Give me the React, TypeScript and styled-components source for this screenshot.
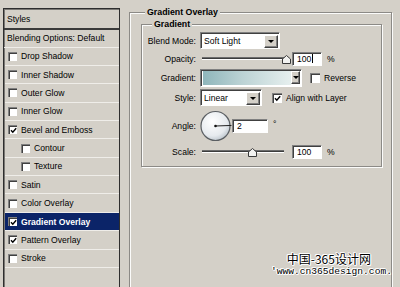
import React from "react";
import styled, { createGlobalStyle } from "styled-components";

const GlobalStyle = createGlobalStyle`
  html, body { margin: 0; padding: 0; background: #d4d0c8; }
  body { width: 400px; height: 287px; overflow: hidden; }
  *, *::before, *::after { box-sizing: border-box; }
`;

const Page = styled.div`
  position: relative;
  display: flex;
  align-items: flex-start;
  width: 400px;
  height: 287px;
  overflow: hidden;
  background: #d4d0c8;
  font-family: "Liberation Sans", Arial, sans-serif;
  font-size: 8.6px;
  color: #000;
`;

/* ---------- left styles list ---------- */

const StylesPanel = styled.div`
  flex-shrink: 0;
  margin: 8px 0 0 3px;
  width: 117px;
  height: 300px;
  border: 1px solid #2e2e2e;
  box-shadow: inset 1px 1px 0 #7a7874;
  display: flex;
  flex-direction: column;
`;

const PanelHeader = styled.div`
  height: 21px;
  display: flex;
  align-items: center;
  padding-left: 3px;
  border-bottom: 2px solid #3a3a3a;
`;

const BlendRow = styled.div`
  height: 17.6px;
  display: flex;
  align-items: center;
  padding-left: 3px;
  border-bottom: 1px solid #efede9;
`;

const ListRow = styled.div<{ $selected?: boolean; $indent?: boolean }>`
  height: 18.36px;
  display: flex;
  align-items: center;
  gap: 4px;
  margin-left: 1px;
  padding-left: ${(p) => (p.$indent ? 16 : 3)}px;
  border-bottom: 1px solid #efede9;
  background: ${(p) => (p.$selected ? "#0b2468" : "transparent")};
  color: ${(p) => (p.$selected ? "#fff" : "#000")};
  font-weight: ${(p) => (p.$selected ? 700 : 400)};
  white-space: nowrap;
`;

const Box = styled.span<{ $size?: number }>`
  flex-shrink: 0;
  width: ${(p) => p.$size ?? 9}px;
  height: ${(p) => p.$size ?? 9}px;
  background: #fff;
  border-top: 1px solid #808080;
  border-left: 1px solid #808080;
  box-shadow: inset 1px 1px 0 #404040;
  display: inline-flex;
  align-items: center;
  justify-content: center;
`;

const CheckBox: React.FC<{ checked?: boolean; size?: number }> = ({ checked, size }) => (
  <Box $size={size}>
    {checked && (
      <svg width="7" height="7" viewBox="0 0 7 7">
        <path d="M1 3.2 L2.8 5.2 L6.2 1.2" stroke="#000" strokeWidth="1.4" fill="none" />
      </svg>
    )}
  </Box>
);

/* ---------- right panel ---------- */

const OuterGroup = styled.fieldset`
  flex-shrink: 0;
  margin: 7px 0 0 9px;
  width: 263px;
  height: 300px;
  padding: 0 8px 0 11px;
  border: 1px solid #8c8a86;
  box-shadow: inset 1px 1px 0 #fbfbfa, 1px 1px 0 #fbfbfa;
  min-width: 0;
`;

const InnerGroup = styled.fieldset`
  margin: 1px 0 0 0;
  width: 241px;
  padding: 2px 0 6px 0;
  border: 1px solid #8c8a86;
  box-shadow: inset 1px 1px 0 #fbfbfa, 1px 1px 0 #fbfbfa;
  min-width: 0;
`;

const GroupTitle = styled.legend<{ $offset: number }>`
  font-weight: 700;
  font-size: 8.8px;
  line-height: 11px;
  padding: 0 2px;
  margin-left: ${(p) => p.$offset}px;
  background: #d4d0c8;
  position: relative;
`;

const Form = styled.div`
  display: grid;
  grid-template-columns: 54px 1fr;
  grid-template-rows: 17px 19px 19px 21px 35px 17px;
  column-gap: 4px;
  align-items: center;
`;

const Label = styled.span`
  text-align: right;
  white-space: nowrap;
`;

const Control = styled.div`
  display: flex;
  align-items: center;
  white-space: nowrap;
`;

const sunken = `
  background: #fff;
  border: 1px solid;
  border-color: #808080 #ffffff #ffffff #808080;
  box-shadow: inset 1px 1px 0 #404040;
`;

const SelectBox = styled.div<{ $w: number }>`
  ${sunken}
  width: ${(p) => p.$w}px;
  height: 17px;
  display: flex;
  align-items: center;
  padding: 1px 1px 0 3px;
`;

const SelectText = styled.span`
  flex: 1;
`;

const DropButton = styled.span<{ $w?: number }>`
  width: ${(p) => p.$w ?? 14}px;
  height: 13px;
  background: #d4d0c8;
  border: 1px solid;
  border-color: #ffffff #404040 #404040 #ffffff;
  box-shadow: inset -1px -1px 0 #808080;
  display: flex;
  align-items: center;
  justify-content: center;
  &::after {
    content: "";
    border-left: 3px solid transparent;
    border-right: 3px solid transparent;
    border-top: 3px solid #000;
  }
`;

const GradientField = styled.div`
  ${sunken}
  width: 102px;
  height: 18px;
  display: flex;
  align-items: center;
  padding: 1px 1px 1px 2px;
`;

const Swatch = styled.span`
  flex: 1;
  height: 100%;
  background: linear-gradient(90deg, #8fb6bb 0%, #bcd3d5 45%, #e6efee 100%);
`;

const Slider = styled.div<{ $w: number }>`
  position: relative;
  width: ${(p) => p.$w}px;
  height: 3px;
  margin-left: 2px;
  background: #3c3c3c;
  border-top: 1px solid #6c6c6c;
  border-bottom: 1px solid #ffffff;
`;

const Thumb = styled.svg`
  position: absolute;
  top: -3px;
  margin-left: -4.5px;
`;

const NumberField = styled.div<{ $w: number; $ml: number }>`
  ${sunken}
  width: ${(p) => p.$w}px;
  height: 14px;
  margin-left: ${(p) => p.$ml}px;
  display: flex;
  align-items: center;
  padding-left: 4px;
`;

const Caret = styled.span`
  width: 1px;
  height: 9px;
  background: #000;
  margin-left: 1px;
`;

const Unit = styled.span<{ $raise?: boolean }>`
  margin-left: 5px;
  align-self: ${(p) => (p.$raise ? "flex-start" : "center")};
  margin-top: ${(p) => (p.$raise ? 9 : 0)}px;
`;

const CheckLabel = styled.label<{ $ml: number }>`
  display: flex;
  align-items: center;
  gap: 4px;
  margin-left: ${(p) => p.$ml}px;
`;

const Dial = styled.svg`
  flex-shrink: 0;
`;

const Watermark = styled.div`
  position: absolute;
  left: 271px;
  top: 251px;
  display: flex;
  flex-direction: column;
  align-items: flex-end;
  color: #000;
  text-shadow: 1px 0 #fff, -1px 0 #fff, 0 1px #fff, 0 -1px #fff, 1px 1px #fff, -1px -1px #fff;
`;

const WmTitle = styled.span`
  font-family: "Noto Sans CJK SC", sans-serif;
  font-size: 12px;
  line-height: 15px;
  margin-right: 23px;
`;

const WmUrl = styled.span`
  font-family: "Liberation Mono", "Courier New", monospace;
  font-size: 9.6px;
  line-height: 12px;
  margin-right: 2px;
`;

const listItems: { label: string; checked?: boolean; indent?: boolean; selected?: boolean }[] = [
  { label: "Drop Shadow" },
  { label: "Inner Shadow" },
  { label: "Outer Glow" },
  { label: "Inner Glow" },
  { label: "Bevel and Emboss", checked: true },
  { label: "Contour", indent: true },
  { label: "Texture", indent: true },
  { label: "Satin" },
  { label: "Color Overlay" },
  { label: "Gradient Overlay", checked: true, selected: true },
  { label: "Pattern Overlay", checked: true },
  { label: "Stroke" },
];

const ThumbIcon: React.FC<{ pos: number }> = ({ pos }) => (
  <Thumb width="9" height="9" viewBox="0 0 9 9" style={{ left: `${pos}%` }}>
    <path d="M4.5 0.5 L8.5 4 L8.5 8.5 L0.5 8.5 L0.5 4 Z" fill="#f2f2f0" stroke="#3a3a3a" strokeWidth="1" />
  </Thumb>
);

export default function App() {
  const angle = 2;
  const rad = (angle * Math.PI) / 180;
  return (
    <Page>
      <GlobalStyle />
      <StylesPanel>
        <PanelHeader>Styles</PanelHeader>
        <BlendRow>Blending Options: Default</BlendRow>
        {listItems.map((it) => (
          <ListRow key={it.label} $selected={it.selected} $indent={it.indent}>
            <CheckBox checked={it.checked} />
            <span>{it.label}</span>
          </ListRow>
        ))}
      </StylesPanel>

      <OuterGroup>
        <GroupTitle $offset={4}>Gradient Overlay</GroupTitle>
        <InnerGroup>
          <GroupTitle $offset={10}>Gradient</GroupTitle>
          <Form>
            <Label>Blend Mode:</Label>
            <Control>
              <SelectBox $w={80}>
                <SelectText>Soft Light</SelectText>
                <DropButton />
              </SelectBox>
            </Control>

            <Label>Opacity:</Label>
            <Control>
              <Slider $w={85}>
                <ThumbIcon pos={99} />
              </Slider>
              <NumberField $w={30} $ml={5}>
                100<Caret />
              </NumberField>
              <Unit>%</Unit>
            </Control>

            <Label>Gradient:</Label>
            <Control>
              <GradientField>
                <Swatch />
                <DropButton $w={9} />
              </GradientField>
              <CheckLabel $ml={8}>
                <CheckBox size={10} />
                <span>Reverse</span>
              </CheckLabel>
            </Control>

            <Label>Style:</Label>
            <Control>
              <SelectBox $w={62}>
                <SelectText>Linear</SelectText>
                <DropButton />
              </SelectBox>
              <CheckLabel $ml={10}>
                <CheckBox size={10} checked />
                <span>Align with Layer</span>
              </CheckLabel>
            </Control>

            <Label>Angle:</Label>
            <Control>
              <Dial width="32" height="32" viewBox="0 0 32 32">
                <defs>
                  <radialGradient id="dialFill" cx="0.4" cy="0.35" r="0.7">
                    <stop offset="0" stopColor="#ffffff" />
                    <stop offset="0.7" stopColor="#e6eaee" />
                    <stop offset="1" stopColor="#b9c2ca" />
                  </radialGradient>
                </defs>
                <circle cx="15.5" cy="16" r="14.5" fill="url(#dialFill)" stroke="#5a5e62" strokeWidth="1.2" />
                <line
                  x1="15.5"
                  y1="16"
                  x2={15.5 + 16 * Math.cos(rad)}
                  y2={16 - 16 * Math.sin(rad)}
                  stroke="#222"
                  strokeWidth="1"
                />
                <circle cx="15.5" cy="16" r="1.3" fill="#111" />
              </Dial>
              <NumberField $w={36} $ml={0}>
                2
              </NumberField>
              <Unit $raise>°</Unit>
            </Control>

            <Label>Scale:</Label>
            <Control>
              <Slider $w={82}>
                <ThumbIcon pos={62} />
              </Slider>
              <NumberField $w={30} $ml={8}>
                100
              </NumberField>
              <Unit>%</Unit>
            </Control>
          </Form>
        </InnerGroup>
      </OuterGroup>

      <Watermark>
        <WmTitle>中国-365设计网</WmTitle>
        <WmUrl>'www.cn365design.com.</WmUrl>
      </Watermark>
    </Page>
  );
}
